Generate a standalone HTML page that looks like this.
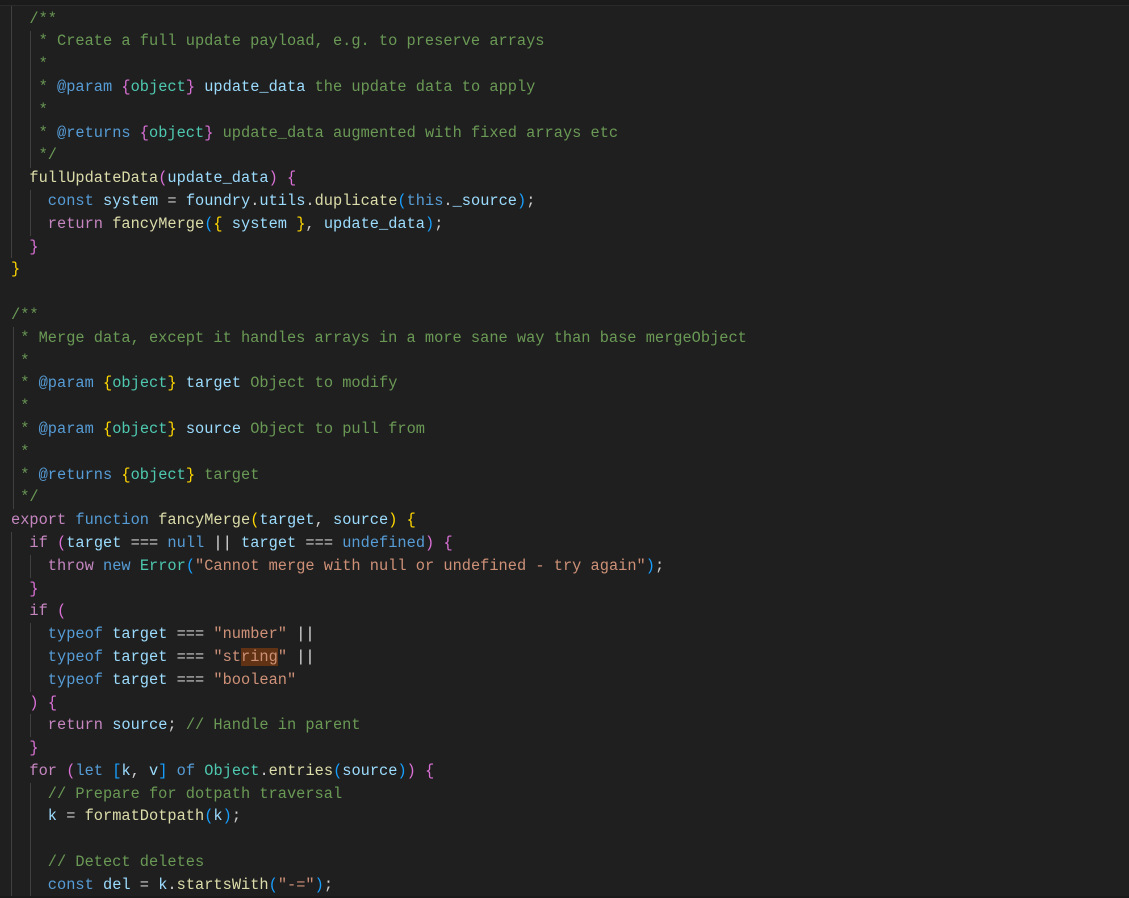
<!DOCTYPE html>
<html><head><style>
html,body{margin:0;padding:0;background:#1f1f1f;width:1129px;height:898px;overflow:hidden}
.top{position:absolute;left:0;top:0;width:1129px;height:5px;background:#1b1b1b;border-bottom:1px solid #2a2a2a}
.bot{position:absolute;left:0;top:896px;width:1129px;height:2px;background:#1a1a1a}
pre{position:absolute;left:11px;top:7.6px;margin:0;font-family:"Liberation Mono",monospace;font-size:15.33px;line-height:22.8px;color:#cccccc;white-space:pre}
.g{position:absolute;width:1px;background:#404040}
.c{color:#6a9955}.k{color:#569cd6}.p{color:#c586c0}.f{color:#dcdcaa}.v{color:#9cdcfe}.s{color:#ce9178}.t{color:#4ec9b0}
.b1{color:#ffd700}.b2{color:#da70d6}.b3{color:#179fff}
.hl{background:#613214}
</style></head><body>
<div class="top"></div>
<div class="g" style="left:11px;top:6px;height:252px"></div>
<div class="g" style="left:30px;top:31px;height:137px"></div>
<div class="g" style="left:30px;top:190px;height:46px"></div>
<div class="g" style="left:13px;top:327px;height:182px"></div>
<div class="g" style="left:11px;top:532px;height:366px"></div>
<div class="g" style="left:30px;top:555px;height:23px"></div>
<div class="g" style="left:30px;top:623px;height:69px"></div>
<div class="g" style="left:30px;top:714px;height:23px"></div>
<div class="g" style="left:30px;top:783px;height:115px"></div>
<div class="bot"></div>
<pre>  <span class="c">/**</span>
<span class="c">   * Create a full update payload, e.g. to preserve arrays</span>
<span class="c">   *</span>
<span class="c">   * </span><span class="k">@param</span> <span class="b2">{</span><span class="t">object</span><span class="b2">}</span> <span class="v">update_data</span><span class="c"> the update data to apply</span>
<span class="c">   *</span>
<span class="c">   * </span><span class="k">@returns</span> <span class="b2">{</span><span class="t">object</span><span class="b2">}</span><span class="c"> update_data augmented with fixed arrays etc</span>
<span class="c">   */</span>
  <span class="f">fullUpdateData</span><span class="b2">(</span><span class="v">update_data</span><span class="b2">)</span> <span class="b2">{</span>
    <span class="k">const</span> <span class="v">system</span> = <span class="v">foundry</span>.<span class="v">utils</span>.<span class="f">duplicate</span><span class="b3">(</span><span class="k">this</span>.<span class="v">_source</span><span class="b3">)</span>;
    <span class="p">return</span> <span class="f">fancyMerge</span><span class="b3">(</span><span class="b1">{</span> <span class="v">system</span> <span class="b1">}</span>, <span class="v">update_data</span><span class="b3">)</span>;
  <span class="b2">}</span>
<span class="b1">}</span>

<span class="c">/**</span>
<span class="c"> * Merge data, except it handles arrays in a more sane way than base mergeObject</span>
<span class="c"> *</span>
<span class="c"> * </span><span class="k">@param</span> <span class="b1">{</span><span class="t">object</span><span class="b1">}</span> <span class="v">target</span><span class="c"> Object to modify</span>
<span class="c"> *</span>
<span class="c"> * </span><span class="k">@param</span> <span class="b1">{</span><span class="t">object</span><span class="b1">}</span> <span class="v">source</span><span class="c"> Object to pull from</span>
<span class="c"> *</span>
<span class="c"> * </span><span class="k">@returns</span> <span class="b1">{</span><span class="t">object</span><span class="b1">}</span><span class="c"> target</span>
<span class="c"> */</span>
<span class="p">export</span> <span class="k">function</span> <span class="f">fancyMerge</span><span class="b1">(</span><span class="v">target</span>, <span class="v">source</span><span class="b1">)</span> <span class="b1">{</span>
  <span class="p">if</span> <span class="b2">(</span><span class="v">target</span> === <span class="k">null</span> <span style="color:#e0e0e0">||</span> <span class="v">target</span> === <span class="k">undefined</span><span class="b2">)</span> <span class="b2">{</span>
    <span class="p">throw</span> <span class="k">new</span> <span class="t">Error</span><span class="b3">(</span><span class="s">"Cannot merge with null or undefined - try again"</span><span class="b3">)</span>;
  <span class="b2">}</span>
  <span class="p">if</span> <span class="b2">(</span>
    <span class="k">typeof</span> <span class="v">target</span> === <span class="s">"number"</span> <span style="color:#e0e0e0">||</span>
    <span class="k">typeof</span> <span class="v">target</span> === <span class="s">"st<span class="hl">ring</span>"</span> <span style="color:#e0e0e0">||</span>
    <span class="k">typeof</span> <span class="v">target</span> === <span class="s">"boolean"</span>
  <span class="b2">)</span> <span class="b2">{</span>
    <span class="p">return</span> <span class="v">source</span>; <span class="c">// Handle in parent</span>
  <span class="b2">}</span>
  <span class="p">for</span> <span class="b2">(</span><span class="k">let</span> <span class="b3">[</span><span class="v">k</span>, <span class="v">v</span><span class="b3">]</span> <span class="k">of</span> <span class="t">Object</span>.<span class="f">entries</span><span class="b3">(</span><span class="v">source</span><span class="b3">)</span><span class="b2">)</span> <span class="b2">{</span>
    <span class="c">// Prepare for dotpath traversal</span>
    <span class="v">k</span> = <span class="f">formatDotpath</span><span class="b3">(</span><span class="v">k</span><span class="b3">)</span>;

    <span class="c">// Detect deletes</span>
    <span class="k">const</span> <span class="v">del</span> = <span class="v">k</span>.<span class="f">startsWith</span><span class="b3">(</span><span class="s">"-="</span><span class="b3">)</span>;
</pre>
</body></html>
